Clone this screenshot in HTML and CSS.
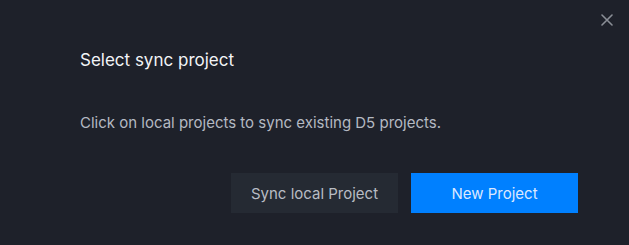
FILE: index.html
```html
<!DOCTYPE html>
<html>
<head>
<meta charset="utf-8">
<link rel="stylesheet" href="styles.css">
</head>
<body>
<div class="dialog">
  <button class="close" aria-label="Close">
    <svg width="12" height="12" viewBox="0 0 12 12"><path d="M1 1L11 11M11 1L1 11" stroke="#8a8e96" stroke-width="1.6" stroke-linecap="round"/></svg>
  </button>
  <h1 class="title">Select sync project</h1>
  <p class="desc">Click on local projects to sync existing D5 projects.</p>
  <div class="actions">
    <button class="btn btn-secondary">Sync local Project</button>
    <button class="btn btn-primary">New Project</button>
  </div>
</div>
</body>
</html>
```
FILE: styles.css
```css
html, body {
  margin: 0;
  padding: 0;
  background: #1e212a;
}
body {
  width: 629px;
  height: 245px;
  font-family: Inter, "Noto Sans", sans-serif;
}
.dialog {
  position: relative;
  box-sizing: border-box;
  height: 245px;
  padding: 48px 51px 0 80px;
  display: flex;
  flex-direction: column;
}
.close {
  position: absolute;
  top: 14px;
  right: 16px;
  width: 12px;
  height: 12px;
  padding: 0;
  border: 0;
  background: none;
  display: flex;
}
.title {
  margin: 0;
  font-size: 17px;
  font-weight: 400;
  line-height: 24px;
  color: #f2f4f7;
}
.desc {
  margin: 41px 0 0;
  font-size: 15px;
  line-height: 20px;
  color: #b4b9c2;
}
.actions {
  margin-top: 40px;
  display: flex;
  justify-content: flex-end;
  gap: 13px;
}
.btn {
  width: 167px;
  height: 40px;
  border: 0;
  padding: 0;
  font-family: Inter, "Noto Sans", sans-serif;
  font-size: 15px;
}
.btn-secondary {
  background: #252a33;
  color: #b8bcc4;
}
.btn-primary {
  background: #0080ff;
  color: #dce8ff;
}
```
